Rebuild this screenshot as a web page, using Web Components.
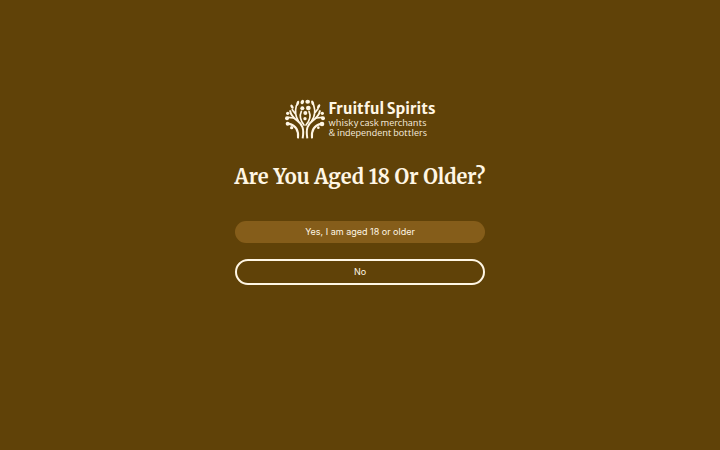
<!DOCTYPE html>
<html lang="en">
<head>
<meta charset="utf-8">
<title>Fruitful Spirits</title>
<style>
  body {
    margin: 0;
    background: #604208;
    color: #fff6e4;
    font-family: Inter, "Liberation Sans", sans-serif;
  }
</style>
</head>
<body>
<age-gate>
  <brand-logo slot="logo"></brand-logo>
  <span slot="title">Are You Aged 18 Or Older?</span>
  <gate-button variant="filled">Yes, I am aged 18 or older</gate-button>
  <gate-button variant="outline">No</gate-button>
</age-gate>

<script>
class BrandLogo extends HTMLElement {
  constructor() {
    super();
    this.attachShadow({ mode: "open" });
  }

  connectedCallback() {
    this.shadowRoot.innerHTML = `
      <style>
        :host {
          display: flex;
          align-items: center;
          gap: 4px;
          font-family: "Merriweather Sans", Lato, sans-serif;
        }

        svg {
          width: 40px;
          height: 40px;
        }

        .name {
          font-size: 15px;
          font-weight: 700;
          line-height: 18px;
        }

        .tagline {
          font-size: 9px;
          font-weight: 300;
          line-height: 10px;
        }
      </style>
      <svg viewBox="12 14 120 120" fill="none" stroke="currentColor" stroke-width="6" aria-hidden="true">
        <path d="M51 132C54 106 44 93 24 88M65 132C70 103 64 90 49 79C36 70 29 61 27 48M79 132C74 103 80 90 95 79C108 70 115 61 117 48M93 132C90 106 100 93 120 88"/>
        <path stroke-width="5" stroke-linecap="round" d="M52 80C43 66 42 50 46 34M43 58L34 46M69 92C58 78 55 64 61 51M75 92C87 78 90 64 84 51M92 80C102 66 103 48 98 32M103 54L111 43M38 71L21 69M106 71L123 69"/>
        <g fill="currentColor" stroke="none">
          <ellipse cx="64" cy="23" rx="5" ry="7" transform="rotate(25 64 23)"/>
          <ellipse cx="80" cy="22" rx="7" ry="6"/>
          <ellipse cx="50" cy="27" rx="4" ry="8" transform="rotate(20 50 27)"/>
          <ellipse cx="95" cy="26" rx="4" ry="8" transform="rotate(-20 95 26)"/>
          <circle cx="64" cy="42" r="6"/>
          <circle cx="82" cy="41" r="7"/>
          <ellipse cx="33" cy="37" rx="4" ry="7" transform="rotate(-30 33 37)"/>
          <ellipse cx="113" cy="36" rx="4" ry="7" transform="rotate(30 113 36)"/>
          <circle cx="73" cy="56" r="6"/>
          <circle cx="72" cy="73" r="5"/>
          <circle cx="20" cy="57" r="5"/>
          <circle cx="124" cy="57" r="5"/>
          <circle cx="18" cy="72" r="6"/>
          <circle cx="126" cy="72" r="6"/>
          <circle cx="20" cy="88" r="6"/>
          <circle cx="123" cy="89" r="7"/>
          <circle cx="32" cy="100" r="5"/>
          <circle cx="112" cy="100" r="4"/>
        </g>
      </svg>
      <div>
        <div class="name">Fruitful Spirits</div>
        <div class="tagline">whisky cask merchants</div>
        <div class="tagline">&amp; independent bottlers</div>
      </div>
    `;
  }
}

class GateButton extends HTMLElement {
  constructor() {
    super();
    this.attachShadow({ mode: "open" });
  }

  connectedCallback() {
    this.shadowRoot.innerHTML = `
      <style>
        :host {
          display: block;
        }

        button {
          box-sizing: border-box;
          width: 100%;
          padding: 4px 12px;
          border: 0;
          border-radius: 13px;
          background: #855d1a;
          color: inherit;
          font-family: inherit;
          font-size: 9px;
          line-height: 14px;
          cursor: pointer;
        }

        :host([variant="outline"]) button {
          border: 2px solid currentColor;
          background: transparent;
        }
      </style>
      <button type="button"><slot></slot></button>
    `;
  }
}

class AgeGate extends HTMLElement {
  constructor() {
    super();
    this.attachShadow({ mode: "open" });
  }

  connectedCallback() {
    this.shadowRoot.innerHTML = `
      <style>
        :host {
          display: flex;
          flex-direction: column;
          align-items: center;
          box-sizing: border-box;
          min-height: 100vh;
          padding: 22vh 16px 16px;
        }

        h1 {
          margin: 24px 0 28px;
          font-family: Merriweather, "DejaVu Serif Condensed", "DejaVu Serif", serif;
          font-size: 20px;
          font-weight: 700;
          line-height: 28px;
          text-align: center;
        }

        .actions {
          display: flex;
          flex-direction: column;
          gap: 16px;
          width: 100%;
          max-width: 250px;
        }
      </style>
      <slot name="logo"></slot>
      <h1><slot name="title"></slot></h1>
      <div class="actions"><slot></slot></div>
    `;
  }
}

customElements.define("brand-logo", BrandLogo);
customElements.define("gate-button", GateButton);
customElements.define("age-gate", AgeGate);
</script>
</body>
</html>
